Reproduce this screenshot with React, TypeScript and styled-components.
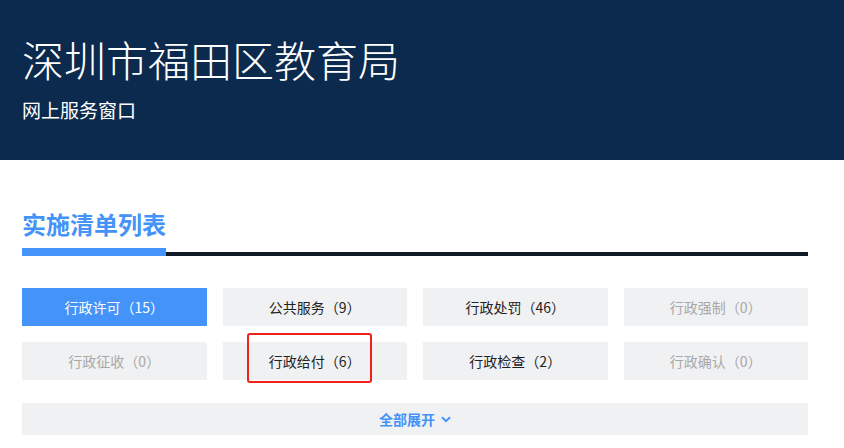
import React from "react";
import styled, { createGlobalStyle } from "styled-components";

const Global = createGlobalStyle`
  html, body { margin: 0; padding: 0; background: #fff; }
  body { font-family: "Noto Sans CJK SC", "Microsoft YaHei", sans-serif; }
  * { box-sizing: border-box; }
`;

const Header = styled.header`
  background: #0b2a4d;
  height: 160px;
  padding: 30px 22px 0;
  color: #fff;
`;

const Title = styled.h1`
  margin: 0;
  font-size: 42px;
  font-weight: 300;
  line-height: 58px;
  letter-spacing: 0;
`;

const Subtitle = styled.div`
  margin-top: 8px;
  font-size: 19px;
  line-height: 28px;
`;

const Main = styled.main`
  padding: 44px 36px 0 22px;
`;

const SectionHead = styled.div`
  display: flex;
  flex-direction: column;
`;

const SectionTitle = styled.h2`
  margin: 0;
  font-size: 24px;
  font-weight: 700;
  color: #4493f8;
  line-height: 40px;
`;

const Rule = styled.div`
  display: flex;
  align-items: flex-end;
  margin-top: 4px;
  height: 8px;
`;

const RuleActive = styled.div`
  width: 144px;
  height: 8px;
  background: #4493f8;
`;

const RuleRest = styled.div`
  flex: 1;
  height: 4px;
  background: #0f1a26;
`;

const Grid = styled.div`
  display: grid;
  grid-template-columns: repeat(4, 1fr);
  gap: 16px;
  margin-top: 32px;
`;

const Item = styled.div<{ $active?: boolean; $disabled?: boolean }>`
  position: relative;
  height: 38px;
  display: flex;
  align-items: center;
  justify-content: center;
  font-size: 14px;
  background: ${(p) => (p.$active ? "#4493f8" : "#f0f1f3")};
  color: ${(p) => (p.$active ? "#fff" : p.$disabled ? "#a8a8a8" : "#222")};
`;

const Highlight = styled.span`
  position: absolute;
  left: 24px;
  right: 35px;
  top: -9px;
  bottom: -3px;
  border: 2px solid #f0201c;
  border-radius: 3px;
  pointer-events: none;
`;

const Expand = styled.div`
  margin-top: 23px;
  height: 32px;
  background: #f0f1f3;
  display: flex;
  align-items: center;
  justify-content: center;
  gap: 6px;
  color: #4493f8;
  font-size: 14px;
  font-weight: 700;
`;

const items = [
  { label: "行政许可（15）", active: true },
  { label: "公共服务（9）" },
  { label: "行政处罚（46）" },
  { label: "行政强制（0）", disabled: true },
  { label: "行政征收（0）", disabled: true },
  { label: "行政给付（6）", highlight: true },
  { label: "行政检查（2）" },
  { label: "行政确认（0）", disabled: true },
];

export default function App() {
  return (
    <>
      <Global />
      <Header>
        <Title>深圳市福田区教育局</Title>
        <Subtitle>网上服务窗口</Subtitle>
      </Header>
      <Main>
        <SectionHead>
          <SectionTitle>实施清单列表</SectionTitle>
          <Rule>
            <RuleActive />
            <RuleRest />
          </Rule>
        </SectionHead>
        <Grid>
          {items.map((it) => (
            <Item key={it.label} $active={it.active} $disabled={it.disabled}>
              {it.label}
              {it.highlight && <Highlight />}
            </Item>
          ))}
        </Grid>
        <Expand>
          全部展开
          <svg width="10" height="7" viewBox="0 0 10 7">
            <path d="M1 1.2 L5 5.2 L9 1.2" fill="none" stroke="#4493f8" strokeWidth="2" />
          </svg>
        </Expand>
      </Main>
    </>
  );
}
